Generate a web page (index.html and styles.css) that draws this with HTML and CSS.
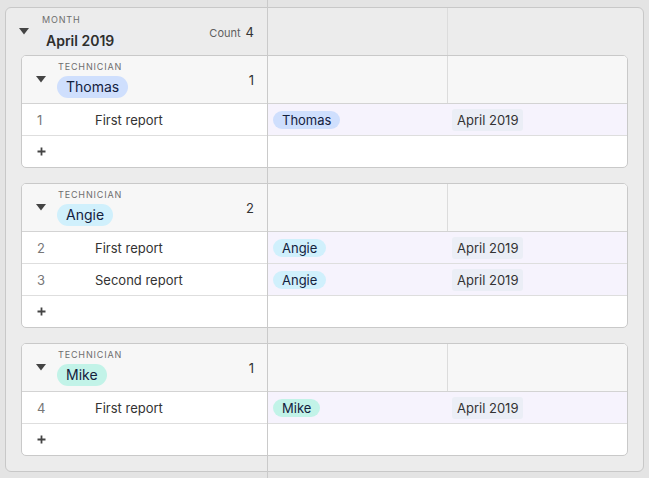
FILE: index.html
```html
<!DOCTYPE html>
<html>
<head>
<meta charset="utf-8">
<link rel="stylesheet" href="styles.css">
</head>
<body>
<div class="page">
  <div class="frozen-line"></div>
  <div class="group">
    <div class="group-head">
      <div class="head-cell outer-cell">
        <svg class="caret" width="10" height="7" viewBox="0 0 10 7"><polygon points="0,0 10,0 5,6.5" fill="#444"/></svg>
        <div class="stack outer-stack">
          <div class="label">MONTH</div>
          <div class="month-chip">April 2019</div>
        </div>
        <div class="count"><span class="count-word">Count</span><span class="count-num">4</span></div>
      </div>
      <div class="col mid"></div>
      <div class="col"></div>
    </div>
    <div class="cards">
      <section class="card">
        <div class="card-head">
          <div class="head-cell">
            <svg class="caret" width="10" height="7" viewBox="0 0 10 7"><polygon points="0,0 10,0 5,6.5" fill="#444"/></svg>
            <div class="stack">
              <div class="label">TECHNICIAN</div>
              <div class="pill big blue">Thomas</div>
            </div>
            <div class="count"><span class="count-num">1</span></div>
          </div>
          <div class="col mid"></div>
          <div class="col"></div>
        </div>
        <div class="row">
          <div class="row-cell"><span class="num">1</span><span class="name">First report</span></div>
          <div class="col tint first"><span class="pill blue">Thomas</span></div>
          <div class="col tint second"><span class="date">April 2019</span></div>
        </div>
        <div class="row add">
          <div class="row-cell"><svg class="plus" width="9" height="9" viewBox="0 0 9 9"><path d="M4.5 0.5v8M0.5 4.5h8" stroke="#444" stroke-width="1.8"/></svg></div>
          <div class="col"></div>
          <div class="col"></div>
        </div>
      </section>

      <section class="card">
        <div class="card-head">
          <div class="head-cell">
            <svg class="caret" width="10" height="7" viewBox="0 0 10 7"><polygon points="0,0 10,0 5,6.5" fill="#444"/></svg>
            <div class="stack">
              <div class="label">TECHNICIAN</div>
              <div class="pill big cyan">Angie</div>
            </div>
            <div class="count"><span class="count-num">2</span></div>
          </div>
          <div class="col mid"></div>
          <div class="col"></div>
        </div>
        <div class="row">
          <div class="row-cell"><span class="num">2</span><span class="name">First report</span></div>
          <div class="col tint first"><span class="pill cyan">Angie</span></div>
          <div class="col tint second"><span class="date">April 2019</span></div>
        </div>
        <div class="row">
          <div class="row-cell"><span class="num">3</span><span class="name">Second report</span></div>
          <div class="col tint first"><span class="pill cyan">Angie</span></div>
          <div class="col tint second"><span class="date">April 2019</span></div>
        </div>
        <div class="row add">
          <div class="row-cell"><svg class="plus" width="9" height="9" viewBox="0 0 9 9"><path d="M4.5 0.5v8M0.5 4.5h8" stroke="#444" stroke-width="1.8"/></svg></div>
          <div class="col"></div>
          <div class="col"></div>
        </div>
      </section>

      <section class="card">
        <div class="card-head">
          <div class="head-cell">
            <svg class="caret" width="10" height="7" viewBox="0 0 10 7"><polygon points="0,0 10,0 5,6.5" fill="#444"/></svg>
            <div class="stack">
              <div class="label">TECHNICIAN</div>
              <div class="pill big teal">Mike</div>
            </div>
            <div class="count"><span class="count-num">1</span></div>
          </div>
          <div class="col mid"></div>
          <div class="col"></div>
        </div>
        <div class="row">
          <div class="row-cell"><span class="num">4</span><span class="name">First report</span></div>
          <div class="col tint first"><span class="pill teal">Mike</span></div>
          <div class="col tint second"><span class="date">April 2019</span></div>
        </div>
        <div class="row add">
          <div class="row-cell"><svg class="plus" width="9" height="9" viewBox="0 0 9 9"><path d="M4.5 0.5v8M0.5 4.5h8" stroke="#444" stroke-width="1.8"/></svg></div>
          <div class="col"></div>
          <div class="col"></div>
        </div>
      </section>
    </div>
  </div>
</div>
</body>
</html>
```

FILE: styles.css
```css
* { box-sizing: border-box; }
html, body {
  margin: 0;
  padding: 0;
}
body {
  background: #e4e4e4;
  font-family: "Inter", "Liberation Sans", sans-serif;
  font-size: 13px;
  color: #333;
  width: 649px;
  height: 478px;
  overflow: hidden;
}
.page {
  position: relative;
  padding: 7px 5px 0 5px;
  height: 478px;
}
.frozen-line {
  position: absolute;
  left: 267px;
  top: 0;
  width: 1px;
  height: 478px;
  background: #cacaca;
  z-index: 5;
}
.group {
  background: #ececec;
  border: 1px solid #c8c8c8;
  border-radius: 6px;
}
.group-head {
  display: grid;
  grid-template-columns: 262px 180px 1fr;
  height: 47px;
}
.col.mid { border-right: 1px solid #dcdcdc; }
.head-cell {
  display: flex;
  align-items: center;
  padding: 0 14px 0 14px;
}
.outer-cell { padding-left: 13px; padding-right: 14px; }
.caret { flex: none; display: block; }
.stack {
  display: flex;
  flex-direction: column;
  align-items: flex-start;
  margin-left: 11px;
}
.outer-stack { margin-left: 11px; margin-top: 1px; }
.label {
  font-size: 9px;
  line-height: 11px;
  letter-spacing: 0.85px;
  color: #6e6e6e;
  font-weight: 400;
  padding-left: 1px;
}
.outer-stack .label { padding-left: 2px; }
.month-chip {
  margin-top: 5px;
  background: #e6eaf3;
  border-radius: 3px;
  padding: 0 6px;
  height: 20px;
  line-height: 21px;
  font-size: 14px;
  font-weight: 600;
  color: #2e2e2e;
}
.count {
  margin-left: auto;
  display: flex;
  align-items: baseline;
  gap: 5px;
}
.count-word { font-size: 11px; color: #5f5f5f; }
.count-num { font-size: 13px; color: #333; }

.cards {
  padding: 0 15px 15px 15px;
  display: flex;
  flex-direction: column;
  gap: 15px;
}
.card {
  background: #fff;
  border: 1px solid #c9c9c9;
  border-radius: 5px;
  overflow: hidden;
}
.card-head {
  display: grid;
  grid-template-columns: 246px 180px 1fr;
  height: 48px;
  background: #f7f7f7;
  border-bottom: 1px solid #d3d3d3;
}
.pill {
  display: inline-block;
  border-radius: 10px;
  height: 18px;
  line-height: 18px;
  padding: 0 9px;
  font-size: 13px;
  color: #14213d;
}
.pill.big {
  margin-top: 4px;
  height: 22px;
  line-height: 22px;
  border-radius: 11px;
  font-size: 14px;
  padding: 0 9px;
}
.blue { background: #cfdffd; }
.cyan { background: #d0f0fc; }
.teal { background: #c2f3e8; }

.row {
  display: grid;
  grid-template-columns: 246px 180px 1fr;
  height: 32px;
  border-bottom: 1px solid #dedede;
}
.row.add {
  height: 31px;
  border-bottom: none;
}
.row-cell {
  display: flex;
  align-items: center;
  padding-left: 15px;
}
.num {
  width: 58px;
  color: #777;
  font-size: 13px;
}
.name { color: #333; }
.plus { display: block; }
.col.tint {
  background: #f6f3fd;
  display: flex;
  align-items: center;
}
.col.first { padding-left: 5px; }
.col.second { padding-left: 4px; }
.date {
  display: inline-block;
  background: #ebeef6;
  border-radius: 3px;
  height: 22px;
  line-height: 22px;
  padding: 0 5px;
  color: #333;
}
```
